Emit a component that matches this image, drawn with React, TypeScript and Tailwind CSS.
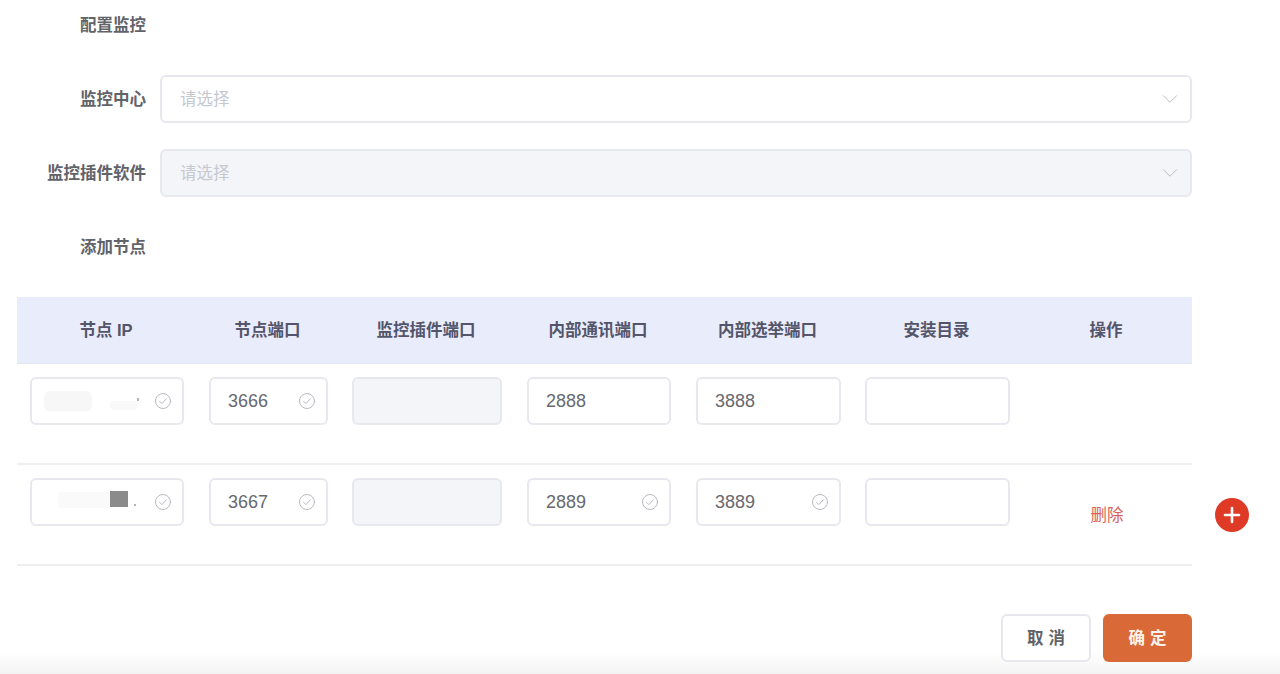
import React from "react";
import { ChevronDown, Plus } from "lucide-react";

const columns = ["节点 IP", "节点端口", "监控插件端口", "内部通讯端口", "内部选举端口", "安装目录", "操作"];
const gridCols = "grid grid-cols-[180px_143px_174px_170px_169px_169px_170px]";

function CheckIcon() {
    return (
        <svg width="18" height="18" viewBox="0 0 24 24" fill="none" stroke="currentColor" strokeWidth="1.3" strokeLinecap="round" strokeLinejoin="round" className="text-[#b6b7be]">
            <circle cx="12" cy="12" r="10" />
            <path d="M7.5 12.5l3 3 6-6.5" />
        </svg>
    );
}

function Select({ disabled }: { disabled?: boolean }) {
    return (
        <div className={`flex-1 h-12 flex items-center justify-between pl-[18px] pr-[7px] border-2 border-[#e7e8ee] rounded-md ${disabled ? "bg-[#f4f5f9]" : "bg-white"}`}>
            <span className="text-[16.5px] text-[#c6c8d0]">请选择</span>
            <ChevronDown size={26} strokeWidth={0.9} className="text-[#b9bbc5]" />
        </div>
    );
}

function Label({ text }: { text: string }) {
    return <div className="w-[146px] text-right text-[16.5px] font-bold text-[#626369] whitespace-nowrap">{text}</div>;
}

function Cell({ value, checked, disabled, children }: { value?: string; checked?: boolean; disabled?: boolean; children?: React.ReactNode }) {
    return (
        <div className={`relative h-12 flex items-center justify-between pl-[17px] pr-[10px] border-2 border-[#e7e8ee] rounded-md ${disabled ? "bg-[#f4f5f9]" : "bg-white"}`}>
            <span className="text-[18px] text-[#68686f]">{value}</span>
            {children}
            {checked && <CheckIcon />}
        </div>
    );
}

export default function App() {
    return (
        <div className="relative h-[674px] w-full overflow-hidden bg-white font-['Liberation_Sans','Noto_Sans_CJK_SC',sans-serif]">
            <div className="absolute left-0 right-0 bottom-0 h-[22px] bg-linear-to-b from-white to-[#f3f3f3]"></div>

            <div className="relative w-[1192px] pt-px flex flex-col gap-[26px]">
                <div className="h-12 flex items-center"><Label text="配置监控" /></div>
                <div className="flex items-center gap-[14px]">
                    <Label text="监控中心" />
                    <Select />
                </div>
                <div className="flex items-center gap-[14px]">
                    <Label text="监控插件软件" />
                    <Select disabled />
                </div>
                <div className="h-12 flex items-center"><Label text="添加节点" /></div>

                {/* Table */}
                <div className="ml-[17px]">
                    <div className={`${gridCols} h-[67px] items-center bg-[#e9ecfb] border-b border-[#e3e5f0]`}>
                        {columns.map(col => (
                            <div key={col} className="pr-[2px] text-center text-[16.5px] font-bold text-[#54556a]">{col}</div>
                        ))}
                    </div>

                    <div className={`${gridCols} h-[101px] pt-[13px] border-b-2 border-[#eeeef2]`}>
                        <div className="px-[13px]">
                            <Cell checked>
                                <span className="absolute left-[12px] top-[12px] w-[48px] h-[20px] rounded-md bg-[#f7f7f7]"></span>
                                <span className="absolute left-[78px] top-[22px] w-[28px] h-[9px] rounded-sm bg-[#f9f9f9]"></span>
                                <span className="absolute left-[105px] top-[19px] w-[2px] h-[3px] bg-[#b5b5b5]"></span>
                            </Cell>
                        </div>
                        <div className="px-3"><Cell value="3666" checked /></div>
                        <div className="px-3"><Cell disabled /></div>
                        <div className="px-[13px]"><Cell value="2888" /></div>
                        <div className="px-3"><Cell value="3888" /></div>
                        <div className="px-3"><Cell /></div>
                        <div></div>
                    </div>

                    <div className={`${gridCols} relative h-[101px] pt-[13px] border-b-2 border-[#eeeef2]`}>
                        <div className="px-[13px]">
                            <Cell checked>
                                <span className="absolute left-[26px] top-[12px] w-[52px] h-[16px] bg-[#fafafa]"></span>
                                <span className="absolute left-[78px] top-[11px] w-[18px] h-[16px] bg-[#8b8b8b]"></span>
                                <span className="absolute left-[102px] top-[24px] w-[2px] h-[2px] bg-[#b5b5b5]"></span>
                            </Cell>
                        </div>
                        <div className="px-3"><Cell value="3667" checked /></div>
                        <div className="px-3"><Cell disabled /></div>
                        <div className="px-[13px]"><Cell value="2889" checked /></div>
                        <div className="px-3"><Cell value="3889" checked /></div>
                        <div className="px-3"><Cell /></div>
                        <div className="pt-[25px] text-center text-[16.5px] text-[#d9635b]">删除</div>
                        <div className="absolute left-[1198px] top-[33px] w-[34px] h-[34px] rounded-full bg-[#de3a26] flex items-center justify-center">
                            <Plus size={24} strokeWidth={2.6} className="text-white" />
                        </div>
                    </div>

                    {/* Footer */}
                    <div className="flex justify-end gap-3 mt-[48px]">
                        <button className="w-[90px] h-12 pl-[5px] bg-white border-2 border-[#e7e8ee] rounded-md text-[16.5px] font-bold tracking-[5px] text-[#626369]">取消</button>
                        <button className="w-[89px] h-12 pl-[5px] bg-[#d96a38] rounded-md text-[16.5px] font-bold tracking-[5px] text-[#fdf3ec]">确定</button>
                    </div>
                </div>
            </div>
        </div>
    );
}
